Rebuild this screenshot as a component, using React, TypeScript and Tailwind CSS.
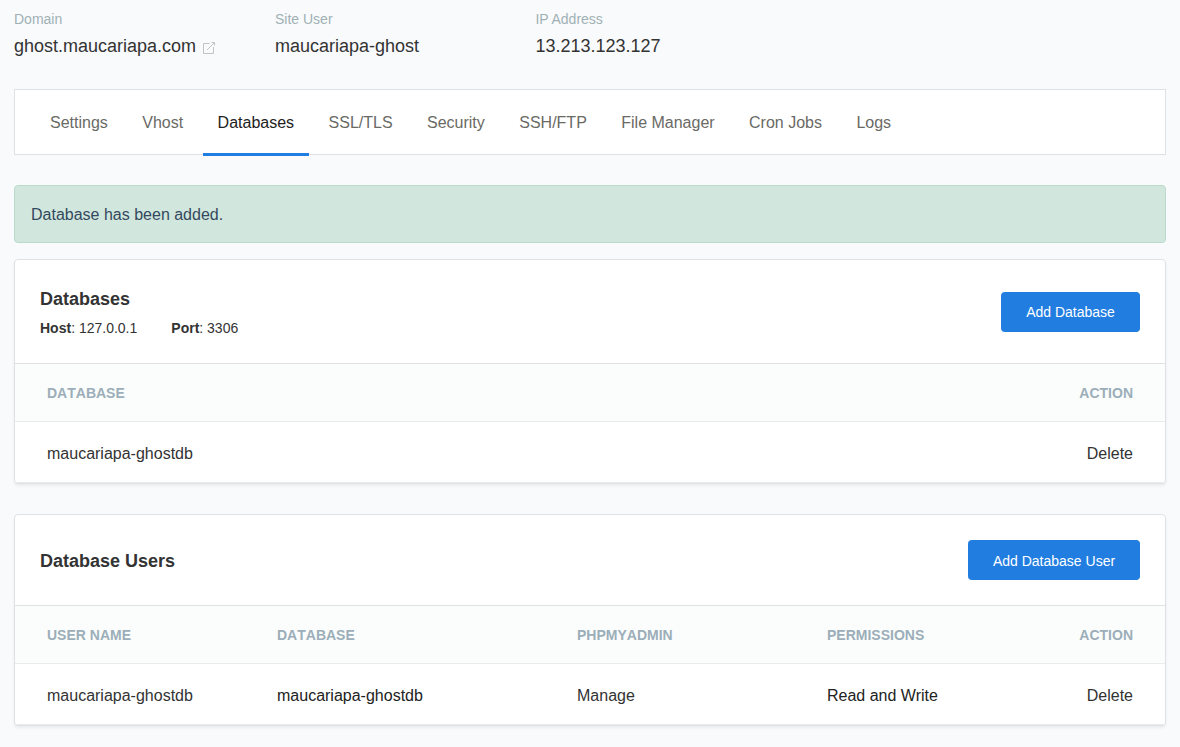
import React from "react";

const tabs = ["Settings", "Vhost", "Databases", "SSL/TLS", "Security", "SSH/FTP", "File Manager", "Cron Jobs", "Logs"];

function Info({ label, value, width, link }: { label: string; value: string; width: string; link?: boolean }) {
  return (
    <div className={width}>
      <div className="text-[14px] leading-[20px] text-[#9fb1b5]">{label}</div>
      <div className="mt-[5px] flex items-center text-[18px] leading-[24px] text-[#333333]">
        <span>{value}</span>
        {link && (
          <svg className="mt-[3px] ml-[7px]" width="13" height="13" viewBox="0 0 13 13" fill="none" stroke="#c3c3c6" strokeWidth="1">
            <path d="M6.500 2.500H.5v10h10V6M4 9l7.500-7.500M8.500 1.500h3v3" />
          </svg>
        )}
      </div>
    </div>
  );
}

function Button({ children, className = "" }: { children: React.ReactNode; className?: string }) {
  return (
    <button className={`h-10 rounded-[4px] bg-[#217ddf] text-[14px] leading-[20px] text-white ${className}`}>{children}</button>
  );
}

function Card({ children, className }: { children: React.ReactNode; className: string }) {
  return (
    <section className={`overflow-hidden rounded-[4px] border border-[#dfe2e5] bg-white shadow-[0_2px_3px_rgba(0,0,0,0.06)] ${className}`}>
      {children}
    </section>
  );
}

const headRow = "flex h-[58px] items-center border-b border-[#e9ecec] bg-[#fbfdfc] px-8 pt-[2px] text-[14px] font-bold text-[#9caeb9] [font-kerning:none]";
const bodyRow = "flex h-[61px] items-center border-b border-[#e9ecec] px-8 pt-[3px] text-[16px] text-[#333333]";

export default function App() {
  return (
    <main className="h-[747px] overflow-hidden bg-[#f9fafc] px-[14px] pt-[9px] font-['Liberation_Sans',Arial,sans-serif] text-[#333333]">
      <div className="flex h-[80px]">
        <Info label="Domain" value="ghost.maucariapa.com" width="w-[261px]" link />
        <Info label="Site User" value="maucariapa-ghost" width="w-[260.4px]" />
        <Info label="IP Address" value="13.213.123.127" width="w-[260px]" />
      </div>
      <nav className="flex h-[66px] gap-[4.45px] border border-[#dfe2e5] bg-white pl-5">
        {tabs.map((tab) => (
          <a
            key={tab}
            className={
              tab === "Databases"
                ? "-mb-[2px] border-b-[3px] border-[#217ddf] px-[15px] leading-[65px] text-[#222222]"
                : "px-[15px] leading-[65px] text-[#6a6a65]"
            }
          >
            {tab}
          </a>
        ))}
      </nav>
      <div className="mt-[30px] flex h-[58px] items-center rounded-[4px] border border-[#badbcc] bg-[#d1e7dd] px-4 pt-[2px] text-[16px] text-[#34495e]">
        Database has been added.
      </div>
      <Card className="mt-4 h-[225px]">
        <div className="flex h-[104px] items-center justify-between border-b border-[#dfe2e5] px-[25px]">
          <div className="pt-[3px]">
            <h2 className="text-[18px] leading-[27px] font-bold text-[#333333]">Databases</h2>
            <div className="mt-[3px] flex gap-[34px] text-[14px] leading-[24px]">
              <span><b>Host</b>: 127.0.0.1</span>
              <span><b>Port</b>: 3306</span>
            </div>
          </div>
          <Button className="w-[139px]">Add Database</Button>
        </div>
        <div className={`${headRow} justify-between`}>
          <span>DATABASE</span>
          <span>ACTION</span>
        </div>
        <div className={`${bodyRow} justify-between`}>
          <span>maucariapa-ghostdb</span>
          <span>Delete</span>
        </div>
      </Card>
      <Card className="mt-[30px] h-[212px]">
        <div className="flex h-[91px] items-center justify-between border-b border-[#dfe2e5] px-[25px]">
          <h2 className="pt-[2px] text-[18px] leading-[27px] font-bold text-[#333333]">Database Users</h2>
          <Button className="w-[172px] pt-[2px]">Add Database User</Button>
        </div>
        <div className={headRow}>
          <span className="w-[230px]">USER NAME</span>
          <span className="w-[300px]">DATABASE</span>
          <span className="w-[250px]">PHPMYADMIN</span>
          <span>PERMISSIONS</span>
          <span className="ml-auto">ACTION</span>
        </div>
        <div className={bodyRow}>
          <span className="w-[230px]">maucariapa-ghostdb</span>
          <span className="w-[300px] text-[#222222]">maucariapa-ghostdb</span>
          <span className="w-[250px]">Manage</span>
          <span className="text-[#222222]">Read and Write</span>
          <span className="ml-auto">Delete</span>
        </div>
      </Card>
    </main>
  );
}
